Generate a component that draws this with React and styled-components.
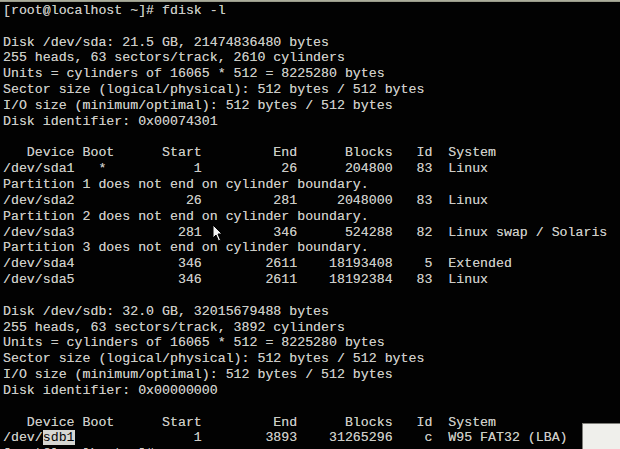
import React from "react";
import styled, { createGlobalStyle } from "styled-components";

const GlobalStyle = createGlobalStyle`
  html, body {
    margin: 0;
    padding: 0;
    background: #020202;
    overflow: hidden;
  }
`;

const Screen = styled.div`
  position: relative;
  width: 620px;
  height: 449px;
  overflow: hidden;
  background: #020202;
`;

const TitleEdge = styled.div`
  height: 2px;
  background: linear-gradient(#b4b6a4, #8e9080);
`;

const Terminal = styled.div`
  padding: 1px 0 0 3px;
  font-family: "Liberation Mono", "DejaVu Sans Mono", monospace;
  font-size: 13.25px;
  line-height: 15.83px;
  color: #cbcbc6;
  text-shadow: 0 0 0.6px rgba(220, 220, 214, 0.7);
`;

const Line = styled.div`
  white-space: pre;
  height: 15.83px;
`;

const Selected = styled.span`
  background: #d6d6d2;
  color: #050505;
  text-shadow: none;
`;

const Pointer = styled.svg`
  position: absolute;
  left: 212px;
  top: 224px;
`;

const PopupCorner = styled.div`
  position: absolute;
  left: 582px;
  top: 423px;
  width: 40px;
  height: 30px;
  background: #efefeb;
  border-left: 1px solid #7d7d78;
  border-top: 1px solid #7d7d78;
`;

const pad = (s, n) => String(s).padStart(n, " ");

const partRow = (dev, boot, start, end, blocks, id, system) =>
  dev.padEnd(9, " ") +
  "   " +
  (boot || " ") +
  pad(start, 12) +
  pad(end, 12) +
  pad(blocks, 12) +
  pad(id, 5) +
  "  " +
  system;

const header = "   Device Boot      Start         End      Blocks   Id  System";

const diskInfo = (name, size, bytes, cyl, ident) => [
  `Disk ${name}: ${size} GB, ${bytes} bytes`,
  `255 heads, 63 sectors/track, ${cyl} cylinders`,
  "Units = cylinders of 16065 * 512 = 8225280 bytes",
  "Sector size (logical/physical): 512 bytes / 512 bytes",
  "I/O size (minimum/optimal): 512 bytes / 512 bytes",
  `Disk identifier: ${ident}`,
];

const lines = [
  "[root@localhost ~]# fdisk -l",
  "",
  ...diskInfo("/dev/sda", "21.5", "21474836480", "2610", "0x00074301"),
  "",
  header,
  partRow("/dev/sda1", "*", 1, 26, 204800, 83, "Linux"),
  "Partition 1 does not end on cylinder boundary.",
  partRow("/dev/sda2", "", 26, 281, 2048000, 83, "Linux"),
  "Partition 2 does not end on cylinder boundary.",
  partRow("/dev/sda3", "", 281, 346, 524288, 82, "Linux swap / Solaris"),
  "Partition 3 does not end on cylinder boundary.",
  partRow("/dev/sda4", "", 346, 2611, 18193408, 5, "Extended"),
  partRow("/dev/sda5", "", 346, 2611, 18192384, 83, "Linux"),
  "",
  ...diskInfo("/dev/sdb", "32.0", "32015679488", "3892", "0x00000000"),
  "",
  header,
];

const sdbRow = partRow("/dev/sdb1", "", 1, 3893, 31265296, "c", "W95 FAT32 (LBA)");

const App = () => {
  return (
    <>
      <GlobalStyle />
      <Screen>
        <TitleEdge />
        <Terminal>
          {lines.map((text, i) => (
            <Line key={i}>{text}</Line>
          ))}
          <Line>
            {"/dev/"}
            <Selected>sdb1</Selected>
            {sdbRow.slice(9)}
          </Line>
          <Line>[root@localhost ~]# </Line>
        </Terminal>
        <Pointer width="12" height="19" viewBox="0 0 12 19">
          <path
            d="M1 1 L1 14 L4 11 L6.5 17 L8.5 16 L6 10 L10 10 Z"
            fill="#f4f4f4"
            stroke="#000"
            strokeWidth="1"
            strokeLinejoin="miter"
          />
        </Pointer>
        <PopupCorner />
      </Screen>
    </>
  );
};

export default App;
